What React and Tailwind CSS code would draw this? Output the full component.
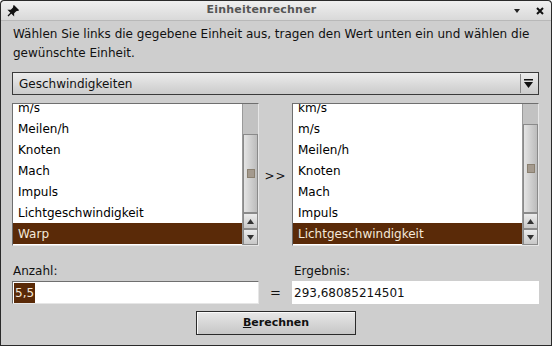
import React from 'react';

const font = { fontFamily: '"DejaVu Sans", Verdana, sans-serif' };

const leftItems = ['m/s', 'Meilen/h', 'Knoten', 'Mach', 'Impuls', 'Lichtgeschwindigkeit', 'Warp'];
const rightItems = ['km/s', 'm/s', 'Meilen/h', 'Knoten', 'Mach', 'Impuls', 'Lichtgeschwindigkeit'];

const Arrow = ({ up }) => (
  <svg width="7" height="5" viewBox="0 0 7 5">
    <path d={up ? 'M0 5 L3.5 0 L7 5 Z' : 'M0 0 L7 0 L3.5 5 Z'} fill="#333" />
  </svg>
);

const Scrollbar = ({ thumbTop, thumbH }) => (
  <div className="w-[16px] flex flex-col bg-[#c4c4c4] border-l border-[#9a9a9a]">
    <div className="flex-1 relative bg-[#c2c2c2]">
      <div
        className="absolute left-0 right-0 bg-gradient-to-r from-[#e4e4e4] to-[#bcbcbc] border border-[#8a8a8a] flex items-center justify-center"
        style={{ top: thumbTop, height: thumbH }}
      >
        <div className="w-[8px] h-[9px] bg-[#a49a8e] border border-[#8a8070]" />
      </div>
    </div>
    <div className="h-[16px] border border-[#8a8a8a] bg-gradient-to-b from-[#ececec] to-[#c8c8c8] flex items-center justify-center">
      <Arrow up />
    </div>
    <div className="h-[16px] border border-[#8a8a8a] bg-gradient-to-b from-[#ececec] to-[#c8c8c8] flex items-center justify-center">
      <Arrow />
    </div>
  </div>
);

const ListBox = ({ items, selected, thumbTop, thumbH }) => (
  <div className="h-[143px] flex border border-[#6f6f6f] border-r-[#e6e6e6] border-b-[#e6e6e6] bg-white overflow-hidden">
    <div className="flex-1 flex flex-col overflow-hidden -mt-[7px]">
      {items.map((it, i) => (
        <div
          key={it}
          className={`h-[21px] shrink-0 flex items-center pl-[5px] text-[12px] ${
            i === selected ? 'bg-[#5a2a08] text-[#f4e8d8]' : 'text-black'
          }`}
        >
          {it}
        </div>
      ))}
    </div>
    <Scrollbar thumbTop={thumbTop} thumbH={thumbH} />
  </div>
);

export default function App() {
  return (
    <div style={font} className="w-[552px] h-[346px] bg-[#2a2a2a] p-[1px] rounded-t-[4px]">
      <div className="w-full h-full flex flex-col bg-[#cecece] rounded-t-[4px] overflow-hidden">
        {/* title bar */}
        <div className="h-[20px] shrink-0 flex items-center px-[6px] bg-gradient-to-b from-[#efefef] to-[#d9d9d9] border-b border-[#b8b8b8]">
          <svg width="12" height="12" viewBox="0 0 12 12">
            <path d="M7 1 L11 5 L9 5.5 L6.5 8 L6.5 10 L2 5.5 L4 5.5 L6.5 3 Z M4 8 L1 11" stroke="#111" strokeWidth="1.3" fill="#111" />
          </svg>
          <div className="flex-1 text-center font-bold text-[11px] text-[#555] tracking-[0.2px] pr-[10px]">Einheitenrechner</div>
          <svg width="6" height="4" viewBox="0 0 6 4" className="mr-[16px]">
            <path d="M0 0 L6 0 L3 4 Z" fill="#222" />
          </svg>
          <svg width="8" height="8" viewBox="0 0 8 8" className="mr-[1px]">
            <path d="M1 1 L7 7 M7 1 L1 7" stroke="#111" strokeWidth="2" />
          </svg>
        </div>

        <div className="flex-1 flex flex-col px-[11px] text-[12px] text-[#111]">
          <p className="mt-[4px] leading-[19px] pl-[1px]">
            Wählen Sie links die gegebene Einheit aus, tragen den Wert unten ein und wählen die gewünschte Einheit.
          </p>

          {/* combo */}
          <div className="mt-[9px] h-[23px] flex items-center border border-[#3a3a3a] bg-gradient-to-b from-[#ececec] to-[#cbcbcb] mr-[1px]">
            <span className="flex-1 pl-[6px]">Geschwindigkeiten</span>
            <div className="w-[16px] h-[19px] mr-[2px] border-l border-[#8a8a8a] flex items-center justify-center">
              <svg width="9" height="9" viewBox="0 0 9 9">
                <rect x="0" y="0" width="9" height="1.5" fill="#111" />
                <path d="M0 3 L9 3 L4.5 9 Z" fill="#111" />
              </svg>
            </div>
          </div>

          {/* lists */}
          <div className="mt-[8px] flex items-center">
            <div className="w-[247px]">
              <ListBox items={leftItems} selected={6} thumbTop={30} thumbH={79} />
            </div>
            <div className="w-[33px] text-center tracking-[1px] pt-[3px]">&gt;&gt;</div>
            <div className="flex-1 mr-[1px]">
              <ListBox items={rightItems} selected={6} thumbTop={20} thumbH={89} />
            </div>
          </div>

          {/* inputs */}
          <div className="mt-[17px] flex items-end">
            <div className="w-[247px] flex flex-col">
              <span className="leading-[16px] pl-[1px]">Anzahl:</span>
              <div className="mt-[2px] h-[23px] flex items-center bg-white border border-[#6f6f6f] border-r-[#e6e6e6] border-b-[#e6e6e6]">
                <span className="ml-[1px] h-[20px] flex items-center bg-[#5a2a08] text-[#f4e8d8] px-[1px]">5,5</span>
              </div>
            </div>
            <div className="w-[33px] h-[23px] flex items-center justify-center text-[13px]">=</div>
            <div className="flex-1 flex flex-col mr-[1px]">
              <span className="leading-[16px] pl-[2px]">Ergebnis:</span>
              <div className="mt-[2px] h-[23px] flex items-center bg-white pl-[2px]">293,68085214501</div>
            </div>
          </div>

          {/* button */}
          <div className="mt-[7px] flex justify-center">
            <button className="w-[160px] h-[24px] border border-[#2a2a2a] bg-gradient-to-b from-[#e8e8e8] to-[#c6c6c6] font-bold text-[11px] text-[#111] shadow-[inset_1px_1px_0_#fafafa]">
              <span className="underline">B</span>erechnen
            </button>
          </div>
        </div>
      </div>
    </div>
  );
}
